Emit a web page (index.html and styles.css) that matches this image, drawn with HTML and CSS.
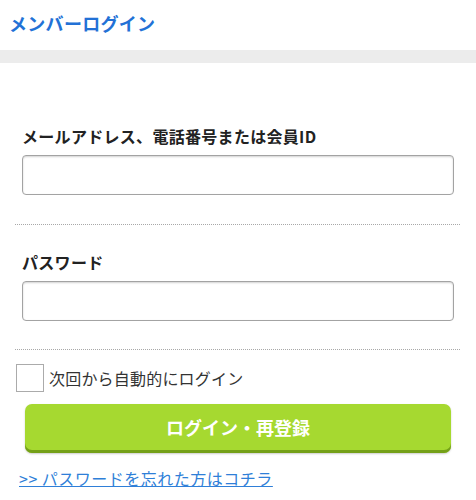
FILE: index.html
```html
<!DOCTYPE html>
<html lang="ja">
<head>
<meta charset="utf-8">
<title>メンバーログイン</title>
<link rel="stylesheet" href="styles.css">
</head>
<body>
<header class="header">
  <h1 class="title">メンバーログイン</h1>
</header>
<div class="band"></div>
<form class="form">
  <div class="field field-first">
    <label class="label" for="uid">メールアドレス、電話番号または会員ID</label>
    <input class="input" id="uid" type="text">
  </div>
  <div class="field">
    <label class="label" for="pw">パスワード</label>
    <input class="input" id="pw" type="password">
  </div>
  <label class="remember">
    <span class="box"></span>
    <span class="remember-text">次回から自動的にログイン</span>
  </label>
  <button class="submit" type="button">ログイン・再登録</button>
  <a class="forgot" href="#">&gt;&gt; パスワードを忘れた方はコチラ</a>
</form>
</body>
</html>
```
FILE: styles.css
```css
* { box-sizing: border-box; }
body {
  margin: 0;
  background: #fff;
  font-family: "Noto Sans CJK JP", "Noto Sans", sans-serif;
  color: #222;
}
.header {
  height: 50px;
  padding: 10px 9px 0;
}
.title {
  margin: 0;
  font-size: 18px;
  line-height: 26px;
  font-weight: 700;
  color: #2271d6;
  letter-spacing: 0.3px;
}
.band {
  height: 13px;
  background: #ececec;
}
.form {
  display: flex;
  flex-direction: column;
  padding: 0 16px 0 15px;
}
.field {
  display: flex;
  flex-direction: column;
  padding: 27px 6px 28px 7px;
  border-bottom: 1px dotted #a8a8a8;
}
.field-first {
  padding-top: 63px;
  padding-bottom: 29px;
}
.label {
  font-size: 16px;
  line-height: 20px;
  font-weight: 700;
  color: #222;
  margin-bottom: 9px;
  letter-spacing: 0.3px;
}
.input {
  height: 40px;
  border: 1px solid #a3a3a3;
  border-radius: 4px;
  box-shadow: inset 0 1px 2px rgba(0, 0, 0, 0.18);
  background: #fff;
  font-size: 16px;
  padding: 0 8px;
  outline: none;
}
.remember {
  display: flex;
  align-items: center;
  gap: 5px;
  margin-top: 14px;
  padding-left: 1px;
}
.box {
  width: 28px;
  height: 28px;
  border: 1px solid #ababab;
  background: #fff;
}
.remember-text {
  font-size: 16px;
  line-height: 20px;
  color: #333;
  letter-spacing: 0.2px;
}
.submit {
  margin: 12px 9px 0 10px;
  height: 49px;
  border: none;
  border-radius: 7px;
  background: #a6d930;
  box-shadow: inset 0 -3px 0 #74a018, 0 1px 2px rgba(0, 0, 0, 0.2);
  color: #fff;
  font-family: inherit;
  font-size: 18px;
  font-weight: 700;
  line-height: 46px;
  padding: 0 0 3px;
}
.forgot {
  margin-top: 15px;
  padding-left: 4px;
  font-size: 16px;
  line-height: 20px;
  color: #2f7fd8;
  text-decoration: underline;
  letter-spacing: 0.5px;
}
```
